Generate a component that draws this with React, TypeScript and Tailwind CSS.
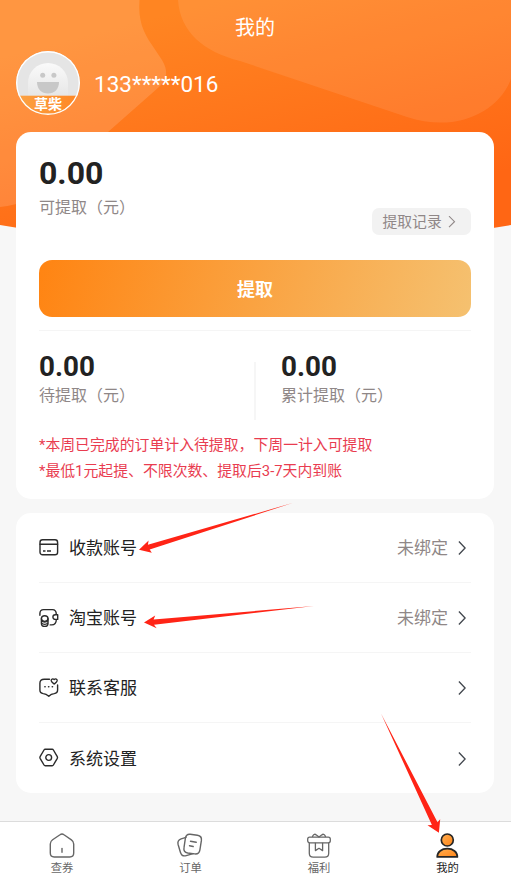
import type { ReactNode } from "react";

interface MenuItem {
  label: string;
  status?: string;
  icon: ReactNode;
}

interface TabItem {
  label: string;
  active?: boolean;
  icon: ReactNode;
}

const strokeProps = {
  fill: "none",
  stroke: "#2b2b2b",
  strokeWidth: 1.4,
  strokeLinecap: "round" as const,
  strokeLinejoin: "round" as const,
};

const CardIcon = () => (
  <svg width="20" height="20" viewBox="0 0 20 20" {...strokeProps}>
    <rect x="1" y="1.8" width="17.6" height="15" rx="2.6" />
    <path d="M1 6.3H18.6" />
    <path d="M4 13H6.5M8 13H12" strokeLinecap="butt" />
  </svg>
);

const WalletIcon = () => (
  <svg width="20" height="20" viewBox="0 0 20 20" {...strokeProps}>
    <path d="M.9 7.2V5.6C.9 3 2.2 1.6 4.6 1.6H13.4C16 1.6 17.3 3 17.3 6.4" />
    <path d="M18.7 6.8H16.2A2.3 2.3 0 0 0 16.2 11.4H18.7Z" />
    <path d="M17.3 11.8C17.2 15.3 15.8 16.9 12.7 16.9H11.2" />
    <ellipse cx="5.7" cy="10.6" rx="3.3" ry="2.8" />
    <path d="M2.4 10.8V15.2C2.4 17.3 3.8 18.4 5.7 18.4S9 17.3 9 15.2V10.8" />
    <path d="M2.6 12.9C3.9 14.5 7.5 14.5 8.8 12.9M2.7 15.2C4 16.8 7.4 16.8 8.7 15.2" strokeWidth="1.2" />
  </svg>
);

const ChatIcon = () => (
  <svg width="20" height="20" viewBox="0 0 20 20" {...strokeProps}>
    <path d="M10.5 1.2H5.2C2 1.2 .9 2.6 .9 5.2V12C.9 14.3 2.1 15.3 4.2 15.6C6.4 15.8 7.5 16.2 9.8 18.2C11.8 16.2 13 15.8 15.2 15.6C17.3 15.3 18.6 14.3 18.6 12V7" />
    <path d="M15.2 1.5C13.9 .2 12 1.1 12.3 2.9C12.6 4.3 14 5.1 15.2 6C16.4 5.1 17.8 4.3 18.1 2.9C18.4 1.1 16.5 .2 15.2 1.5Z" />
    <path d="M5.9 8.8H6.1M9.6 8.8H9.8M13.3 8.8H13.5" strokeWidth="1.6" />
  </svg>
);

const SettingIcon = () => (
  <svg width="20" height="20" viewBox="0 0 20 20" {...strokeProps}>
    <path d="M6.2 1.3H13.2Q14 1.3 14.4 2L18.3 8.7Q18.7 9.5 18.3 10.3L14.4 17Q14 17.7 13.2 17.7H6.2Q5.4 17.7 5 17L1.1 10.3Q.7 9.5 1.1 8.7L5 2Q5.4 1.3 6.2 1.3Z" />
    <circle cx="9.7" cy="9.5" r="2.9" />
  </svg>
);

const HomeIcon = () => (
  <svg width="28" height="28" viewBox="0 0 28 28" fill="none" stroke="#666" strokeWidth="1.4" strokeLinecap="round">
    <path d="M12 2.8Q14 1.3 16 2.8L23.4 7.8Q25.7 9.4 25.7 12V21.1Q25.7 25 21.8 25H6.2Q2.3 25 2.3 21.1V12Q2.3 9.4 4.6 7.8Z" />
    <path d="M14 16.5V20.3" />
  </svg>
);

const OrderIcon = () => (
  <svg width="28" height="28" viewBox="0 0 28 28" fill="none" stroke="#666" strokeWidth="1.4" strokeLinecap="round">
    <path d="M10 5.3L5.2 6.8C2.4 7.8 1.4 9.7 2.1 12.5L4.4 20.2C5.4 23.3 7.3 24.5 10.2 23.6L17.2 21.6" />
    <path d="M14.2 2.3L21.4 3.3Q26 4 25.4 8.4L23.9 17.8Q23.2 22.4 18.7 21.9L11.7 21Q7.2 20.2 8 15.7L9.4 6.2Q10.2 1.8 14.2 2.3Z" />
    <path d="M14.5 9.3L20.2 10.3M13.5 13.7L17.2 14.5" />
  </svg>
);

const GiftIcon = () => (
  <svg width="28" height="28" viewBox="0 0 28 28" fill="none" stroke="#666" strokeWidth="1.3" strokeLinejoin="round">
    <rect x="2.7" y="5.2" width="22.6" height="5.6" rx="2" />
    <path d="M4.3 10.8V21.2Q4.3 25.1 8.2 25.1H19.8Q23.7 25.1 23.7 21.2V10.8" />
    <path d="M7.4 5L8 3.5Q9.3 1.3 11.4 3L14 5L16.6 3Q18.7 1.3 20 3.5L20.6 5" />
    <path d="M10.4 10.8V18.6L14 16.3L17.6 18.6V10.8" />
  </svg>
);

const UserIcon = () => (
  <svg width="28" height="28" viewBox="0 0 28 28" stroke="#262626" strokeWidth="1.7" strokeLinejoin="round">
    <defs>
      <linearGradient id="user" x1="0" y1="0" x2="1" y2="1">
        <stop offset="0" stopColor="#ffae52" />
        <stop offset="1" stopColor="#ff8518" />
      </linearGradient>
    </defs>
    <circle cx="14.3" cy="8" r="6" fill="url(#user)" />
    <path d="M4.2 24.9C4.2 20 8.5 16.7 14.3 16.7S24.4 20 24.4 24.9Z" fill="url(#user)" />
  </svg>
);

const Chevron = () => (
  <svg width="9" height="16" viewBox="0 0 9 16" fill="none" stroke="#41464d" strokeWidth="1.3">
    <path d="M.9 1.5L7.1 8L.9 14.5" />
  </svg>
);

const menu: MenuItem[] = [
  { label: "收款账号", status: "未绑定", icon: <CardIcon /> },
  { label: "淘宝账号", status: "未绑定", icon: <WalletIcon /> },
  { label: "联系客服", icon: <ChatIcon /> },
  { label: "系统设置", icon: <SettingIcon /> },
];

const tabs: TabItem[] = [
  { label: "查券", icon: <HomeIcon /> },
  { label: "订单", icon: <OrderIcon /> },
  { label: "福利", icon: <GiftIcon /> },
  { label: "我的", active: true, icon: <UserIcon /> },
];

function Backdrop() {
  return (
    <svg className="absolute left-0 top-0" width="511" height="240" viewBox="0 0 511 240">
      <defs>
        <linearGradient id="bg" gradientUnits="userSpaceOnUse" x1="220" y1="0" x2="280" y2="230">
          <stop offset="0" stopColor="#ff8522" />
          <stop offset="1" stopColor="#ff6614" />
        </linearGradient>
        <clipPath id="curve">
          <path d="M0 0H511V225Q255 269 0 225Z" />
        </clipPath>
      </defs>
      <g clipPath="url(#curve)">
        <rect width="511" height="240" fill="url(#bg)" />
        <path d="M0 0H139.5C138 20 143 32 152 45L162 60C168 70 168 79 159 87L108 132L60 178Q30 205 0 207Z" fill="#fff" fillOpacity=".14" />
        <path d="M178 0C180 32 204 52 240 61L407 117C455 133 498 113 511 79V0Z" fill="#fff" fillOpacity=".09" />
      </g>
    </svg>
  );
}

function Avatar() {
  return (
    <div className="relative h-16 w-16 overflow-hidden rounded-full">
      <svg width="64" height="64" viewBox="0 0 64 64">
        <defs>
          <linearGradient id="ghost" x1="0" y1="0" x2="0" y2="1">
            <stop offset="0" stopColor="#fafafa" />
            <stop offset="1" stopColor="#e6e6e6" />
          </linearGradient>
          <linearGradient id="band" x1="0" y1="0" x2="1" y2="0">
            <stop offset="0" stopColor="#fba244" />
            <stop offset="1" stopColor="#ff8623" />
          </linearGradient>
        </defs>
        <rect width="64" height="64" fill="#e5e5e5" />
        <path d="M12 46V32A20 20 0 0 1 52 32V46Z" fill="url(#ghost)" />
        <circle cx="26.7" cy="24.3" r="2.5" fill="#c8c8c8" />
        <circle cx="37.9" cy="24.3" r="2.5" fill="#c8c8c8" />
        <path d="M21 31H43C43 38 38.5 42.5 32 42.5S21 38 21 31Z" fill="#c8c8c8" />
        <rect y="44.7" width="64" height="20" fill="url(#band)" />
        <circle cx="32" cy="32" r="31.3" fill="none" stroke="#fff" strokeWidth="1.4" />
      </svg>
      <span className="absolute inset-x-0 top-[46px] text-center text-[14px] font-bold leading-[15px] text-white">草柴</span>
    </div>
  );
}

// red hand-placed pointers over the page
function Pointers() {
  return (
    <svg className="pointer-events-none absolute left-0 top-0" width="511" height="880" viewBox="0 0 511 880" fill="#ff2416">
      <path d="M139 549.8L148.6 540.5L147.9 544.8L292.5 503L149.7 549.5L151.8 552.8Z" />
      <path d="M144 622.6L155.2 615.4L153.6 619.6L314 606L154 624.8L156.7 628.3Z" />
      <path d="M438.9 832.8L427.5 825.3L431.9 824.9L381 713.5L437.5 822.2L440.2 819.2Z" />
    </svg>
  );
}

export default function App() {
  return (
    <div className="relative flex h-[880px] w-[511px] flex-col overflow-hidden bg-[#f7f7f7] font-['Roboto','Noto_Sans_CJK_SC',sans-serif] text-[#222]">
      <Backdrop />

      <header className="relative flex h-[132px] flex-col text-white">
        <h1 className="h-[51px] pr-px pt-[14px] text-center text-[20px] leading-[28px]">我的</h1>
        <div className="flex items-center gap-[14px] pl-4">
          <Avatar />
          <span className="pt-0.5 text-[22.5px] leading-8">133*****016</span>
        </div>
      </header>

      <main className="relative flex-1 px-4 pr-[17px]">
        <section className="h-[367px] rounded-[15px] bg-white px-[23px] pt-[23px]">
          <div className="flex h-[105px] justify-between">
            <div>
              <div className="text-[32px] font-bold leading-[37px]">0.00</div>
              <div className="mt-[4px] text-[16px] leading-6 text-[#8f8787]">可提取（元）</div>
            </div>
            <button className="mt-[52.5px] flex h-[27.5px] w-[99.5px] items-center gap-[6px] rounded-[7px] bg-[#f2f2f2] pl-[11px] pt-px text-[14.8px] text-[#8f8787]">
              提取记录
              <svg width="8" height="12" viewBox="0 0 8 12" fill="none" stroke="#8f8787" strokeWidth="1.1">
                <path d="M1 .2L6.5 5.7L1 11.2" />
              </svg>
            </button>
          </div>

          <button className="h-[57px] w-full rounded-[13px] bg-[linear-gradient(105deg,#ff8412,#f5c170)] pt-0.5 text-[18px] font-bold text-white">
            提取
          </button>

          <div className="mt-[13px] flex border-t border-[#f5f5f5] pt-[20px]">
            <div className="w-[215px]">
              <div className="text-[27.8px] font-bold leading-8">0.00</div>
              <div className="pt-px text-[16px] leading-6 text-[#8f8787]">待提取（元）</div>
            </div>
            <div className="mt-[11px] h-[58px] w-[1.5px] bg-[#f6f6f6]" />
            <div className="pl-[25.5px]">
              <div className="text-[27.8px] font-bold leading-8">0.00</div>
              <div className="pt-px text-[16px] leading-6 text-[#8f8787]">累计提取（元）</div>
            </div>
          </div>

          <div className="mt-[12px] text-[14.87px] leading-[26px] text-[#e93c50]">
            <p>*本周已完成的订单计入待提取，下周一计入可提取</p>
            <p>*最低1元起提、不限次数、提取后3-7天内到账</p>
          </div>
        </section>

        <section className="mt-[14px] rounded-[15px] bg-white px-[23px]">
          {menu.map((item, i) => (
            <div key={item.label} className={`flex h-[70.1px] items-center ${i < menu.length - 1 ? "border-b border-[#f5f5f5]" : ""}`}>
              <span className="ml-[0.4px]">{item.icon}</span>
              <span className="ml-[9.6px] flex-1 pt-[3px] text-[17px]">{item.label}</span>
              {item.status && <span className="mr-[10px] pt-[3px] text-[17px] text-[#8f8787]">{item.status}</span>}
              <span className="mr-1 pt-px"><Chevron /></span>
            </div>
          ))}
        </section>
      </main>

      <nav className="relative h-[59px] border-t border-[#dcdcdc] bg-white">
        <div className="-ml-[2.3px] flex w-[514px]">
          {tabs.map((tab) => (
            <div key={tab.label} className={`flex flex-1 flex-col items-center pt-[10px] text-[11.3px] leading-[15px] ${tab.active ? "text-[#222]" : "text-[#666]"}`}>
              {tab.icon}
              <span className="pt-px">{tab.label}</span>
            </div>
          ))}
        </div>
      </nav>

      <Pointers />
    </div>
  );
}
